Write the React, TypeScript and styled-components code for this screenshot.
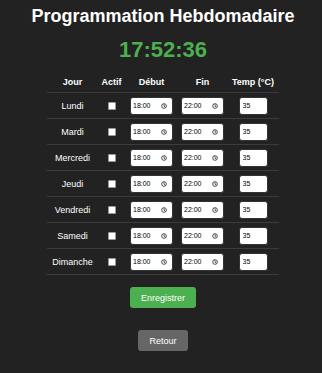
import * as React from "react";
import styled, { createGlobalStyle } from "styled-components";

const days = ["Lundi", "Mardi", "Mercredi", "Jeudi", "Vendredi", "Samedi", "Dimanche"];

function TimeBox({ value }: { value: string }): JSX.Element {
  return (
    <TimeField>
      <TimeText type="text" defaultValue={value} />
      <ClockIcon viewBox="0 0 10 10" aria-hidden="true">
        <circle cx="5" cy="5" r="3.9" fill="none" stroke="#222" strokeWidth="1.3" />
        <path d="M5 2.8V5.2L6.6 6.3" fill="none" stroke="#222" strokeWidth="1.2" strokeLinecap="round" />
      </ClockIcon>
    </TimeField>
  );
}

export default function App(): JSX.Element {
  return (
    <>
      <GlobalStyle />
      <Page>
        <Title>Programmation Hebdomadaire</Title>
        <Clock>17:52:36</Clock>
        <Schedule>
          <HeaderRow>
            <HeadCell>Jour</HeadCell>
            <HeadCell>Actif</HeadCell>
            <HeadCell>Début</HeadCell>
            <HeadCell>Fin</HeadCell>
            <HeadCell>Temp (°C)</HeadCell>
          </HeaderRow>
          {days.map((day) => (
            <DayRow key={day}>
              <DayCell>{day}</DayCell>
              <DayCell>
                <Check type="checkbox" />
              </DayCell>
              <DayCell>
                <TimeBox value="18:00" />
              </DayCell>
              <DayCell>
                <TimeBox value="22:00" />
              </DayCell>
              <DayCell>
                <TempInput type="number" defaultValue={35} />
              </DayCell>
            </DayRow>
          ))}
        </Schedule>
        <Actions>
          <Button $variant="save">Enregistrer</Button>
          <Button $variant="back">Retour</Button>
        </Actions>
      </Page>
    </>
  );
}

const GlobalStyle = createGlobalStyle`
  html, body {
    margin: 0;
    background: #222222;
  }
  body {
    min-height: 100vh;
    font-family: "Liberation Sans", Arial, sans-serif;
    color: #fff;
  }
`;

const Page = styled("div")`
  display: flex;
  flex-direction: column;
  align-items: center;
  padding: 5px 0 0 4px;
`;

const Title = styled("h1")`
  margin: 0;
  font-size: 18px;
  line-height: 22px;
  font-weight: bold;
  color: #fff;
`;

const Clock = styled("div")`
  margin-top: 10px;
  font-size: 22px;
  line-height: 26px;
  font-weight: bold;
  color: #4caf50;
`;

const Schedule = styled("div")`
  margin-top: 9px;
  display: flex;
  flex-direction: column;
`;

const HeaderRow = styled("div")`
  display: grid;
  grid-template-columns: 51px 27px 53px 49px 52px;
  height: 20px;
  border-bottom: 1px solid #3c3c3c;
`;

const HeadCell = styled("div")`
  display: flex;
  align-items: center;
  justify-content: center;
  font-size: 9px;
  font-weight: bold;
  white-space: nowrap;
`;

const DayRow = styled(HeaderRow)`
  height: 25px;
`;

const DayCell = styled("div")`
  display: flex;
  align-items: center;
  justify-content: center;
  font-size: 9px;
  white-space: nowrap;
`;

const Check = styled("input")`
  appearance: none;
  margin: 0;
  width: 8px;
  height: 8px;
  background: #fff;
  border: 1px solid #9a9a9a;
  border-radius: 1px;
`;

const TimeField = styled("label")`
  box-sizing: border-box;
  display: flex;
  align-items: center;
  width: 43px;
  height: 18px;
  padding: 0 5px 0 2px;
  background: #fff;
  border: 1px solid #333;
  border-radius: 3px;
`;

const TimeText = styled("input")`
  flex: 1;
  min-width: 0;
  margin: 0;
  padding: 0;
  border: none;
  outline: none;
  background: transparent;
  font-family: "Liberation Sans", Arial, sans-serif;
  font-size: 7px;
  color: #000;
`;

const ClockIcon = styled("svg")`
  width: 6px;
  height: 6px;
  flex: none;
`;

const TempInput = styled("input")`
  box-sizing: border-box;
  width: 29px;
  height: 18px;
  margin: 0;
  padding: 0 3px;
  font-family: "Liberation Sans", Arial, sans-serif;
  font-size: 7px;
  color: #000;
  background: #fff;
  border: 1px solid #333;
  border-radius: 3px;
  -moz-appearance: textfield;
  &::-webkit-inner-spin-button,
  &::-webkit-outer-spin-button {
    -webkit-appearance: none;
    margin: 0;
  }
`;

const Actions = styled("div")`
  margin-top: 12px;
  display: flex;
  flex-direction: column;
  align-items: center;
  gap: 22px;
`;

const Button = styled("button")<{ $variant: "save" | "back" }>`
  height: 21px;
  padding: 0 11px;
  font-family: "Liberation Sans", Arial, sans-serif;
  font-size: 9px;
  color: #fff;
  border: none;
  border-radius: 3px;
  background: ${(p) => (p.$variant === "save" ? "#4caf50" : "#666666")};
  cursor: pointer;
`;
